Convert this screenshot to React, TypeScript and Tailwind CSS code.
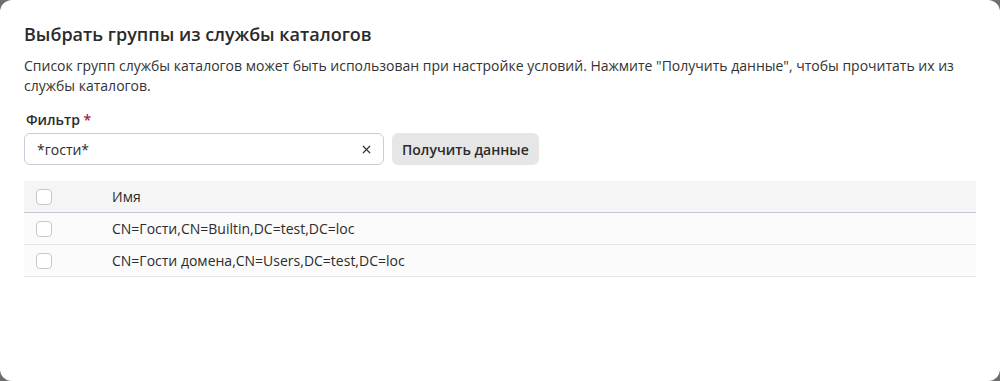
import { X } from "lucide-react"

const rows = [
  "CN=Гости,CN=Builtin,DC=test,DC=loc",
  "CN=Гости домена,CN=Users,DC=test,DC=loc",
]

function Box() {
  return <span className="block w-4 h-4 rounded-[4px] border border-[#c6c6cc] bg-white" />
}

export default function App() {
  return (
    <div className="w-[1000px] h-[381px] bg-[#6e6e6e]" style={{ fontFamily: '"Open Sans", "Noto Sans", sans-serif' }}>
      <div className="w-full h-full bg-white rounded-[12px] px-6 pt-[20px] text-[#2b2b2b]">
        <h2 className="text-[18px] leading-[28px] font-semibold text-[#2b2b2b]">Выбрать группы из службы каталогов</h2>
        <p className="mt-[8px] text-[14px] leading-[20px] text-[#333] pr-[20px]">
          Список групп службы каталогов может быть использован при настройке условий. Нажмите "Получить данные", чтобы прочитать их из службы каталогов.
        </p>
        <div className="mt-[14px] pl-[2px] text-[14px] leading-[20px] font-semibold">
          Фильтр <span className="text-[#a0224a]">*</span>
        </div>
        <div className="mt-[3px] flex items-center gap-2">
          <div className="w-[360px] h-[32px] rounded-[6px] border border-[#c9ccd6] flex items-center pl-[12px] pr-[10px]">
            <span className="flex-1 text-[14px]">*гости*</span>
            <X size={13} strokeWidth={2.2} className="text-[#333]" />
          </div>
          <button className="h-[32px] px-[10px] rounded-[6px] bg-[#e6e6e6] text-[14px] font-semibold text-[#2b2b2b]">
            Получить данные
          </button>
        </div>
        <div className="mt-[16px] w-[952px] text-[14px]">
          <div className="h-[32px] flex items-center bg-[#f5f5f5] border-b border-[#c9c5d6]">
            <div className="w-[88px] pl-[12px]"><Box /></div>
            <div>Имя</div>
          </div>
          {rows.map((r) => (
            <div key={r} className="h-[32px] flex items-center bg-[#fbfbfb] border-b border-[#e6e6e6]">
              <div className="w-[88px] pl-[12px]"><Box /></div>
              <div>{r}</div>
            </div>
          ))}
        </div>
      </div>
    </div>
  )
}
